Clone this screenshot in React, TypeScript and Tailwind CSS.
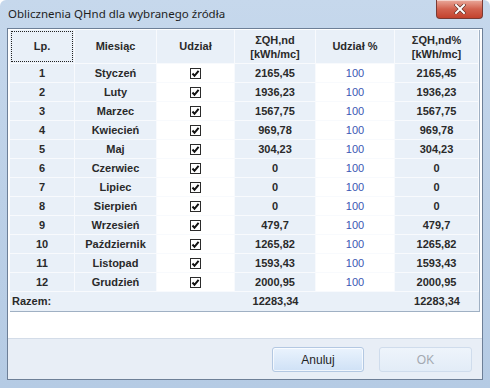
import React from 'react'

const months: [string, string, boolean][] = [
  ['Styczeń', '2165,45', true],
  ['Luty', '1936,23', true],
  ['Marzec', '1567,75', true],
  ['Kwiecień', '969,78', true],
  ['Maj', '304,23', true],
  ['Czerwiec', '0', true],
  ['Lipiec', '0', true],
  ['Sierpień', '0', true],
  ['Wrzesień', '479,7', true],
  ['Październik', '1265,82', true],
  ['Listopad', '1593,43', true],
  ['Grudzień', '2000,95', true],
]

const Check = () => (
  <span className="flex h-[11px] w-[11px] items-center justify-center border border-[#2b2b2b] bg-white">
    <svg width="9" height="9" viewBox="0 0 9 9">
      <path d="M1.5 4.5 L3.5 6.8 L7.6 1.8" fill="none" stroke="#111" strokeWidth="2" />
    </svg>
  </span>
)

const cell = 'flex items-center justify-center border-r border-b border-[#f8fafd]'

export default function App() {
  return (
    <div
      className="flex h-[388px] w-[490px] flex-col overflow-hidden rounded-t-[6px] bg-gradient-to-b from-[#c6d8ec] via-[#bcd0e7] to-[#b5cbe4] text-[#2a2a2a]"
      style={{ fontFamily: '"Liberation Sans", Arial, sans-serif' }}
    >
      {/* title bar */}
      <div className="relative flex h-[28px] items-center pl-[8px] pb-[1px]">
        <span className="text-[11.5px] text-[#1e1e1e]" style={{ fontFamily: '"Noto Sans", sans-serif' }}>
          Oblicznenia QHnd dla wybranego źródła
        </span>
        <div className="absolute top-0 right-[7px] flex h-[19px] w-[47px] items-center justify-center rounded-b-[4px] border border-t-0 border-[#7a3a33] bg-gradient-to-b from-[#e9a99c] via-[#d2624f] to-[#c3422d] shadow-[inset_0_1px_0_rgba(255,255,255,0.5)]">
          <svg width="12" height="10" viewBox="0 0 12 10">
            <path d="M2 1 L10 9 M10 1 L2 9" stroke="#5a2a22" strokeWidth="3.2" strokeLinecap="square" />
            <path d="M2 1 L10 9 M10 1 L2 9" stroke="#fff" strokeWidth="2" strokeLinecap="square" />
          </svg>
        </div>
      </div>

      {/* client area */}
      <div className="mx-[7px] mb-[8px] flex flex-1 flex-col border border-[#6d7f97] bg-white">
        <div className="flex-1 border-b border-[#d3dce8] pt-[1px] pl-[2px]">
          <div className="grid w-[470px] grid-cols-[65px_82px_78px_81px_79px_84px] border-r border-b border-[#9fb0c3] text-[11px] font-bold">
            {/* header */}
            <div className={`${cell} h-[34px] bg-[#e9f0f8] p-[1px]`}>
              <div className="flex h-full w-full items-center justify-center border border-dotted border-[#222]">Lp.</div>
            </div>
            <div className={`${cell} h-[34px] bg-[#e9f0f8]`}>Miesiąc</div>
            <div className={`${cell} h-[34px] bg-[#e9f0f8]`}>Udział</div>
            <div className={`${cell} h-[34px] flex-col bg-[#e9f0f8] leading-[14px]`}>
              <span>ΣQH,nd</span>
              <span>[kWh/mc]</span>
            </div>
            <div className={`${cell} h-[34px] bg-[#e9f0f8]`}>Udział %</div>
            <div className={`${cell} h-[34px] flex-col bg-[#e9f0f8] leading-[14px]`}>
              <span>ΣQH,nd%</span>
              <span>[kWh/mc]</span>
            </div>

            {months.map(([name, val, on], i) => (
              <React.Fragment key={name}>
                <div className={`${cell} h-[19px] bg-[#e9f0f8]`}>{i + 1}</div>
                <div className={`${cell} h-[19px] bg-[#e9f0f8]`}>{name}</div>
                <div className={`${cell} h-[19px] bg-white`}>{on && <Check />}</div>
                <div className={`${cell} h-[19px] bg-[#e9f0f8]`}>{val}</div>
                <div className={`${cell} h-[19px] bg-white font-normal text-[#3a56b4]`}>100</div>
                <div className={`${cell} h-[19px] bg-[#e9f0f8]`}>{val}</div>
              </React.Fragment>
            ))}

            {/* total */}
            <div className="col-span-3 flex h-[19px] items-center bg-[#e9f0f8] pl-[2px]">Razem:</div>
            <div className="flex h-[19px] items-center justify-center bg-[#e9f0f8]">12283,34</div>
            <div className="h-[19px] bg-[#e9f0f8]" />
            <div className="flex h-[19px] items-center justify-center bg-[#e9f0f8]">12283,34</div>
          </div>
        </div>

        {/* footer */}
        <div className="flex h-[40px] items-start justify-end gap-[15px] bg-[#e8eef6] pt-[8px] pr-[10px]">
          <button className="h-[25px] w-[92px] rounded-[3px] border border-[#b3c8e2] bg-gradient-to-b from-[#eaf3fd] to-[#cfe1f6] text-[12px] text-[#1f1f1f] shadow-[inset_0_0_0_1px_rgba(255,255,255,0.7)]">
            Anuluj
          </button>
          <button className="h-[25px] w-[93px] rounded-[3px] border border-[#cfdcec] bg-gradient-to-b from-[#eef4fb] to-[#e2ecf7] text-[12px] text-[#a3a9b1]">
            OK
          </button>
        </div>
      </div>
    </div>
  )
}
